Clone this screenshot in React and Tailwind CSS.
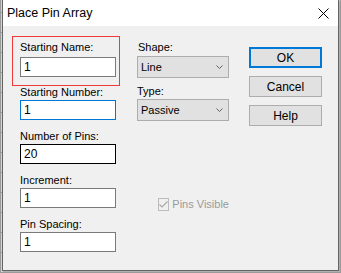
import React from 'react';

const font = { fontFamily: '"Liberation Sans", Arial, sans-serif' };

const Field = ({ label, value, border = 'border-[#7a7a7a]', first = false }) => (
  <div className={first ? '' : 'mt-[10px]'}>
    <div className="h-[13px] leading-[13px] text-[11px] text-black whitespace-nowrap">{label}</div>
    <div className={`mt-px w-[96px] h-[20px] border ${border} bg-white flex items-center pl-[3px] text-[12px] text-black`}>
      {value}
    </div>
  </div>
);

const Select = ({ value }) => (
  <div className="w-[92px] h-[22px] border border-[#adadad] bg-[#e1e1e1] flex items-center justify-between pl-[3px] pr-[5px] text-[11px] text-black">
    <span>{value}</span>
    <svg width="7" height="4" viewBox="0 0 7 4">
      <path d="M0.5 0.5 L3.5 3.5 L6.5 0.5" fill="none" stroke="#606060" strokeWidth="1" />
    </svg>
  </div>
);

const Button = ({ children, primary = false }) => (
  <div
    className={`w-[73px] h-[21px] bg-[#e1e1e1] flex items-center justify-center text-[12px] text-black ${
      primary ? 'border-2 border-[#0078d7]' : 'border border-[#adadad]'
    }`}
  >
    {children}
  </div>
);

export default function App() {
  return (
    <div
      className="w-[341px] h-[273px] pl-[2px] bg-[#d4d4d4] bg-[repeating-linear-gradient(90deg,#9a9a9a_0_1px,transparent_1px_20px),repeating-linear-gradient(0deg,#9a9a9a_0_1px,transparent_1px_20px)] overflow-hidden"
      style={font}
    >
      <div className="w-[337px] h-[271px] border-l border-r border-b border-[#646464] bg-[#f0f0f0] shadow-[1px_1px_0_#b0b0b0] flex flex-col">
        {/* title bar */}
        <div className="h-[26px] bg-white flex items-center justify-between pl-[4px] pr-[9px] shrink-0">
          <span className="text-[12.5px] text-black">Place Pin Array</span>
          <svg width="11" height="11" viewBox="0 0 11 11">
            <path d="M0.5 0.5 L10.5 10.5 M10.5 0.5 L0.5 10.5" stroke="#000" strokeWidth="1" />
          </svg>
        </div>

        {/* body */}
        <div className="flex flex-row">
          {/* left column */}
          <div className="ml-[9px] mt-[10px] w-[108px] flex flex-col">
            <div className="w-[108px] h-[50px] border border-[#f03a3a] pt-[4px]">
              <div className="ml-[7px] h-[13px] leading-[13px] text-[11px] text-black">Starting Name:</div>
              <div className="mt-[3px] ml-[7px] w-[96px] h-[20px] border border-[#7a7a7a] bg-white flex items-center pl-[3px] text-[12px] text-black">
                1
              </div>
            </div>
            <div className="ml-[8px]">
              <Field label="Starting Number:" value="1" border="border-[#0078d7]" first />
              <Field label="Number of Pins:" value="20" border="border-black" />
              <Field label="Increment:" value="1" />
              <Field label="Pin Spacing:" value="1" />
            </div>
          </div>

          {/* middle column */}
          <div className="ml-[17px] mt-[15px] w-[92px] flex flex-col">
            <div className="ml-px h-[13px] leading-[13px] text-[11px] text-black">Shape:</div>
            <div className="mt-[2px]">
              <Select value="Line" />
            </div>
            <div className="mt-[7px] h-[13px] leading-[13px] text-[11px] text-black">Type:</div>
            <div className="mt-px">
              <Select value="Passive" />
            </div>
            <div className="mt-[75px] ml-[21px] flex items-center gap-[3px]">
              <div className="w-[13px] h-[13px] border border-[#bcbcbc] flex items-center justify-center">
                <svg width="9" height="7" viewBox="0 0 9 7">
                  <path d="M0.5 3.5 L3 6 L8.5 0.5" fill="none" stroke="#a8a8a8" strokeWidth="1.2" />
                </svg>
              </div>
              <span className="text-[11px] text-[#9a9a9a] whitespace-nowrap">Pins Visible</span>
            </div>
          </div>

          {/* buttons */}
          <div className="ml-[20px] mt-[21px] flex flex-col gap-[8px]">
            <Button primary>OK</Button>
            <Button>Cancel</Button>
            <Button>Help</Button>
          </div>
        </div>
      </div>
    </div>
  );
}
